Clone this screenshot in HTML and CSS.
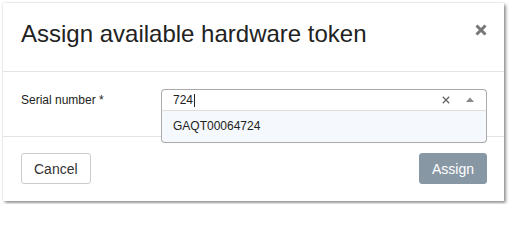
FILE: index.html
```html
<!DOCTYPE html>
<html>
<head>
<meta charset="utf-8">
<link rel="stylesheet" href="styles.css">
</head>
<body>
<div class="modal">
  <div class="modal-header">
    <h1 class="modal-title">Assign available hardware token</h1>
    <svg class="close" width="12" height="12" viewBox="0 0 12 12"><path d="M1.5 1.5 L10.5 10.5 M10.5 1.5 L1.5 10.5" stroke="#777" stroke-width="3" stroke-linecap="butt"/></svg>
  </div>
  <div class="modal-body">
    <label class="field-label">Serial number *</label>
    <div class="select">
      <div class="select-box">
        <span class="select-value">724<span class="caret"></span></span>
        <svg class="clear" width="8" height="8" viewBox="0 0 8 8"><path d="M0.8 0.8 L7.2 7.2 M7.2 0.8 L0.8 7.2" stroke="#666" stroke-width="1.3"/></svg>
        <svg class="arrow" width="8" height="5" viewBox="0 0 8 5"><path d="M0 5 L4 0.5 L8 5 Z" fill="#888"/></svg>
      </div>
      <div class="dropdown">
        <div class="option">GAQT00064724</div>
      </div>
    </div>
  </div>
  <div class="modal-footer">
    <button class="btn btn-default">Cancel</button>
    <button class="btn btn-primary">Assign</button>
  </div>
</div>
</body>
</html>
```
FILE: styles.css
```css
html, body {
  margin: 0;
  padding: 0;
  background: #fff;
}
body {
  padding: 3px;
  font-family: "Liberation Sans", Arial, Helvetica, sans-serif;
  color: #222;
}
.modal {
  width: 501px;
  height: 198px;
  background: #fff;
  box-shadow: 0 0 2px rgba(0,0,0,0.18), 2px 2px 3px rgba(0,0,0,0.4);
  display: flex;
  flex-direction: column;
}
.modal-header {
  box-sizing: border-box;
  height: 69px;
  padding: 17px 17px 0 18px;
  border-bottom: 1px solid #e3e3e3;
  display: flex;
  justify-content: space-between;
  align-items: flex-start;
}
.modal-title {
  margin: 0;
  font-size: 24px;
  font-weight: normal;
  line-height: 27px;
  color: #222;
}
.close {
  margin-top: 4px;
}
.modal-body {
  box-sizing: border-box;
  height: 65px;
  padding: 17px 17px 0 18px;
  border-bottom: 1px solid #e3e3e3;
  display: flex;
  align-items: flex-start;
}
.field-label {
  width: 140px;
  font-size: 12px;
  line-height: 22px;
  color: #222;
}
.select {
  position: relative;
  width: 326px;
}
.select-box {
  box-sizing: border-box;
  height: 22px;
  border: 1px solid #aaa;
  border-bottom-color: #ddd;
  border-radius: 4px 4px 0 0;
  padding: 0 12px 0 11px;
  display: flex;
  align-items: center;
  font-size: 12px;
  background: #fff;
}
.select-value {
  flex: 1;
  display: flex;
  align-items: center;
  color: #222;
}
.caret {
  display: inline-block;
  width: 1px;
  height: 13px;
  background: #222;
  margin-left: 1px;
}
.clear {
  margin-right: 16px;
}
.arrow {
  margin-top: -1px;
}
.dropdown {
  position: absolute;
  top: 22px;
  left: 0;
  right: 0;
  background: #f5f8fc;
  border: 1px solid #aaa;
  border-top: none;
  border-radius: 0 0 4px 4px;
  z-index: 2;
}
.option {
  font-size: 12px;
  line-height: 15px;
  padding: 8px 11px;
  color: #222;
}
.modal-footer {
  flex: 1;
  padding: 16px 17px 0 18px;
  display: flex;
  justify-content: space-between;
  align-items: flex-start;
}
.btn {
  box-sizing: border-box;
  height: 31px;
  font-family: "Liberation Sans", Arial, Helvetica, sans-serif;
  font-size: 14px;
  border-radius: 3px;
  margin: 0;
}
.btn-default {
  background: #fff;
  border: 1px solid #ccc;
  color: #333;
  padding: 0 12px;
}
.btn-primary {
  background: #8897a4;
  border: 1px solid #8897a4;
  color: #fff;
  padding: 0 12px;
}
```
